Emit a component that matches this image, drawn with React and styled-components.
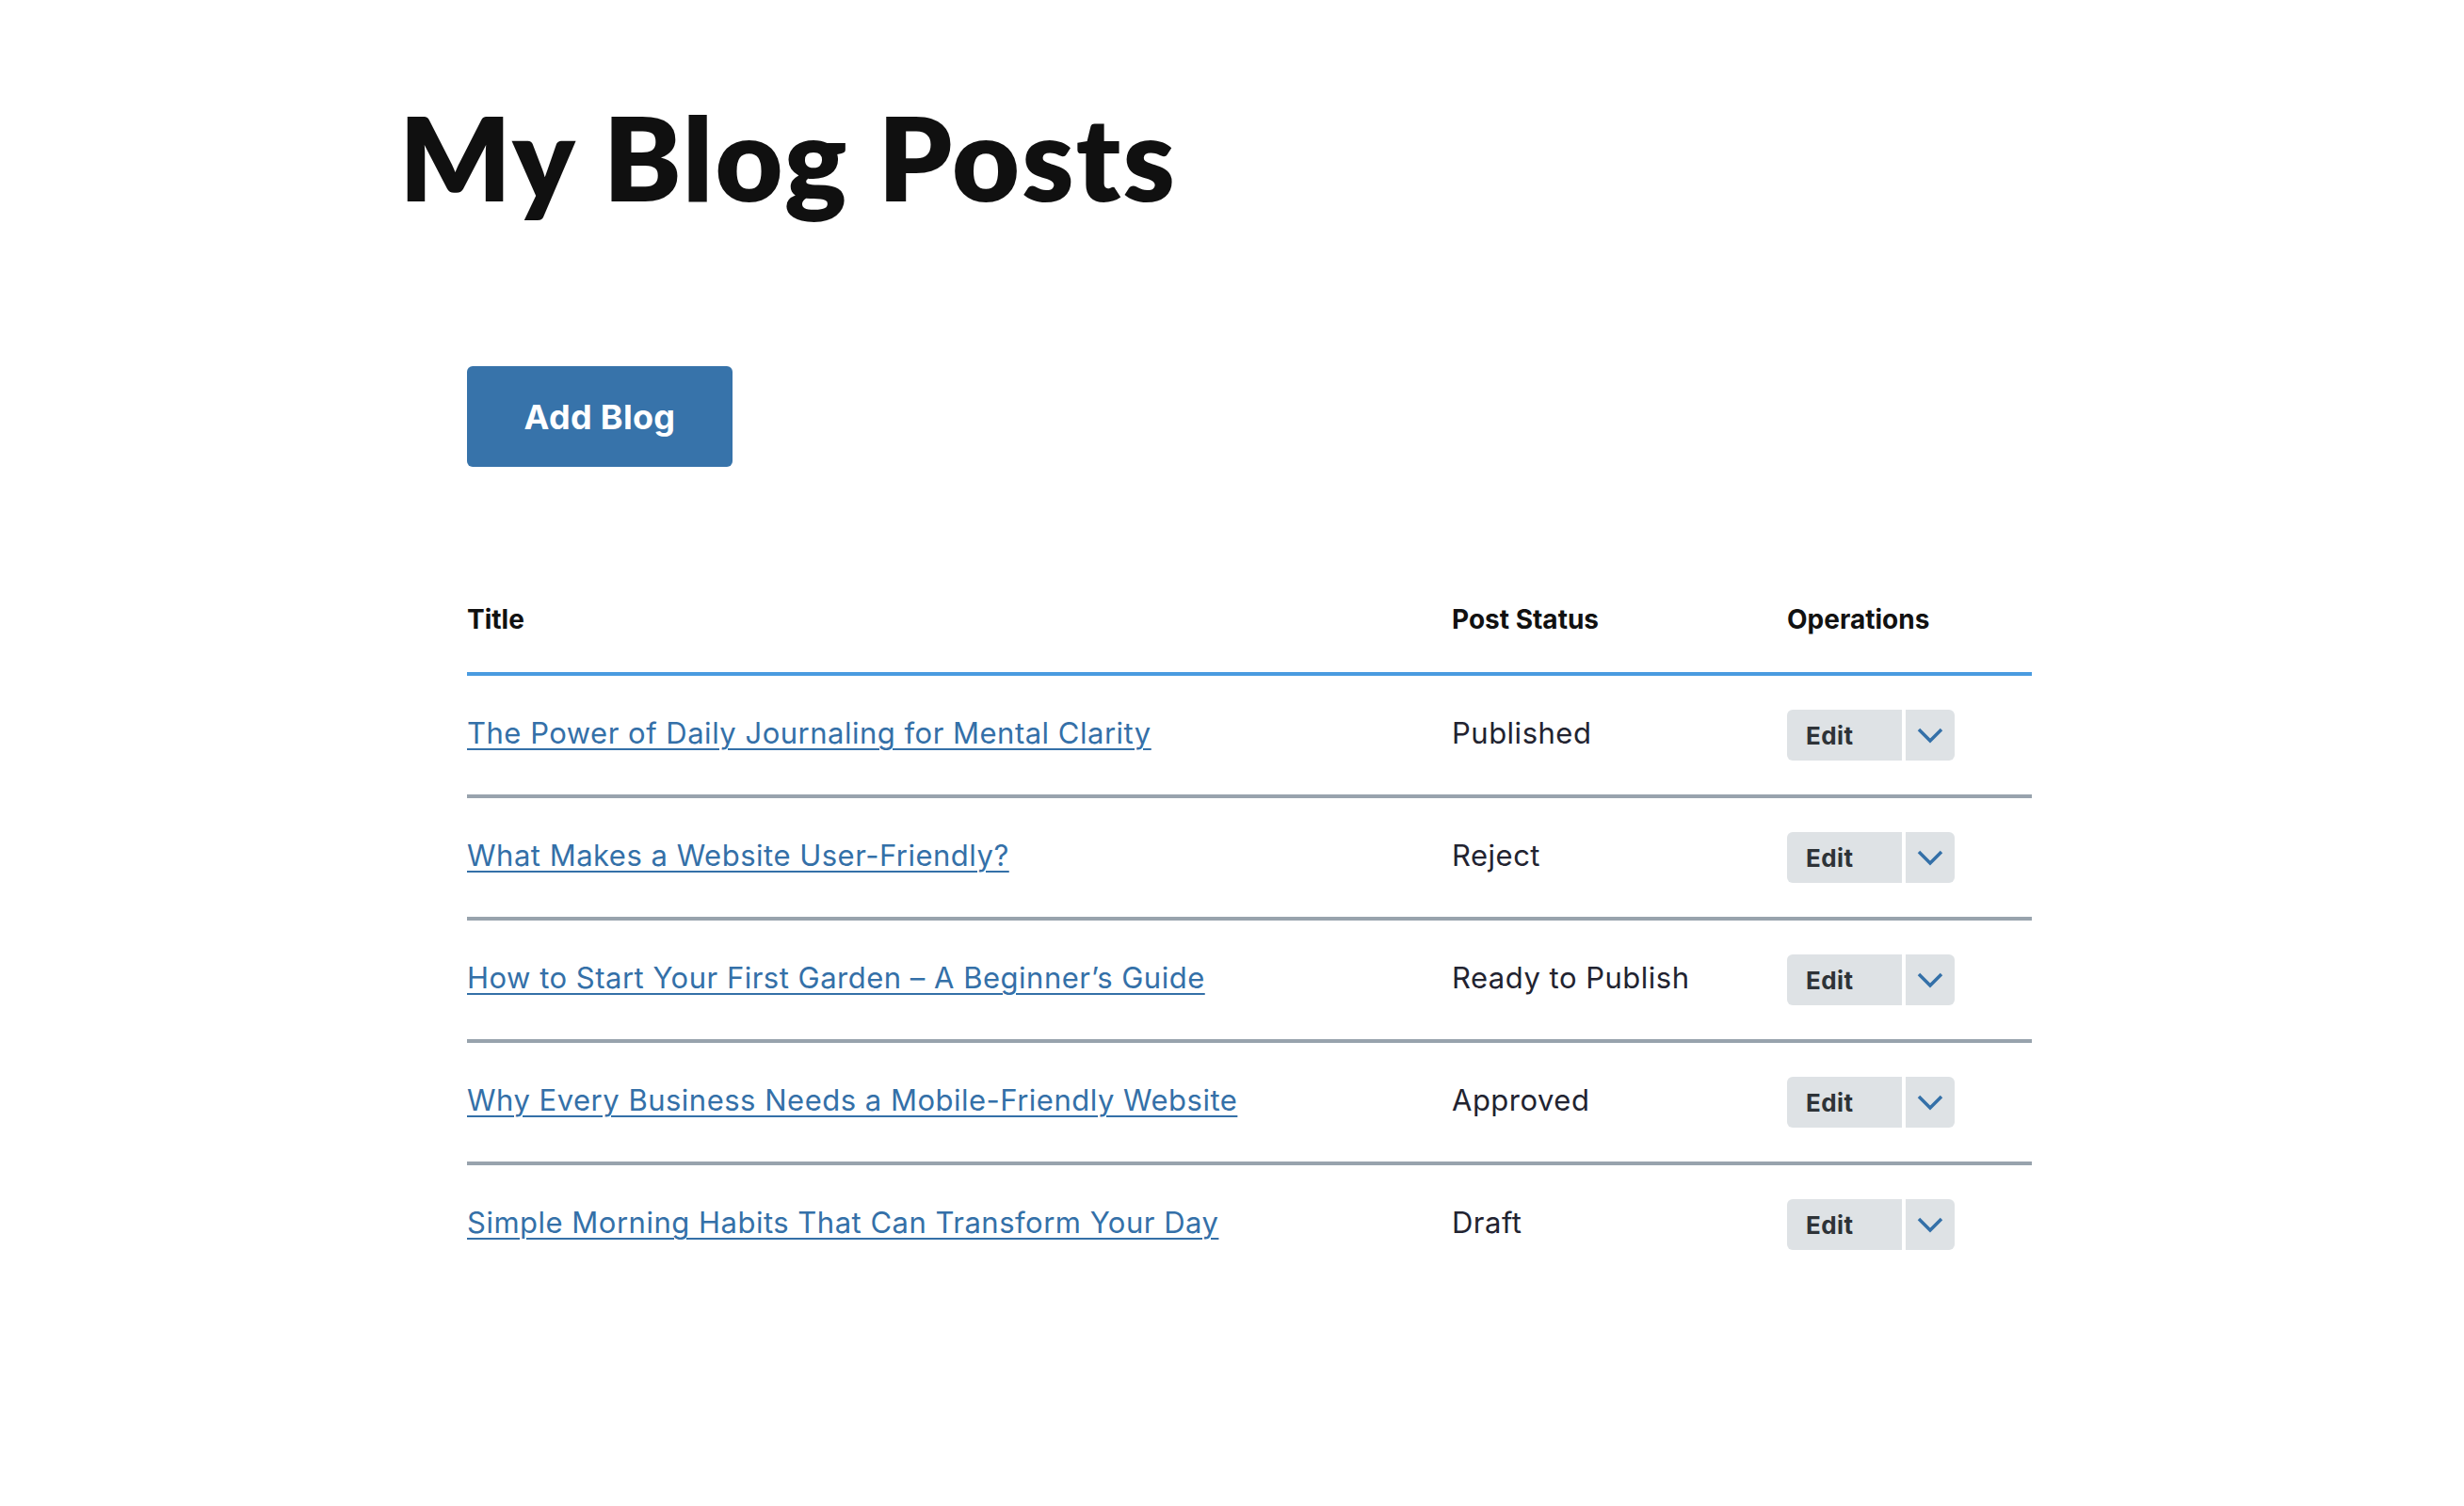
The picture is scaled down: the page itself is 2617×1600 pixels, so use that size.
import React from 'react'
import styled, { createGlobalStyle } from 'styled-components'

const GlobalStyle = createGlobalStyle`
    body {
        margin: 0;
        background: #fff;
        font-family: Inter, "Noto Sans", sans-serif;
        color: #222330;
    }
`

const Page = styled.div`
    padding: 104px 0 0 424px;
`

const Heading = styled.h1`
    margin: 0;
    font-family: Lato, sans-serif;
    font-size: 124px;
    line-height: 1;
    font-weight: 800;
    color: #101010;
    letter-spacing: 2.2px;
`

const Content = styled.div`
    padding: 161px 0 0 72px;
    width: 1662px;
`

const AddButton = styled.button`
    display: flex;
    align-items: center;
    justify-content: center;
    width: 282px;
    height: 107px;
    border: none;
    border-radius: 6px;
    background: #3773aa;
    color: #fff;
    font-family: Inter, sans-serif;
    font-size: 36px;
    font-weight: 700;
    letter-spacing: 0.3px;
    cursor: pointer;
`

const Table = styled.table`
    margin-top: 105px;
    width: 100%;
    border-collapse: collapse;
    table-layout: fixed;
`

const HeadCell = styled.th`
    height: 113px;
    padding: 0;
    text-align: left;
    font-size: 28px;
    font-weight: 700;
    color: #111;
    border-bottom: 4px solid #4a9be0;
    width: ${p => p.$w || 'auto'};
`

const Row = styled.tr`
    border-bottom: ${p => (p.$last ? 'none' : '4px solid #98a3ad')};
`

const Cell = styled.td`
    height: ${p => (p.$text ? '121px' : '126px')};
    padding: 0 0 ${p => (p.$text ? '5px' : '0')} 0;
    font-size: 31px;
    letter-spacing: 0.5px;
    color: #222330;
    vertical-align: middle;
`

const TitleLink = styled.a`
    color: #3470a8;
    text-decoration: underline;
    text-decoration-thickness: 2px;
    text-underline-offset: 5px;
`

const OpGroup = styled.div`
    display: inline-flex;
    gap: 4px;
    height: 54px;
`

const EditBtn = styled.button`
    width: 122px;
    padding: 0 0 0 20px;
    text-align: left;
    border: none;
    border-radius: 6px 0 0 6px;
    background: #dee2e5;
    color: #2e3338;
    font-family: Inter, sans-serif;
    font-size: 26px;
    font-weight: 700;
    letter-spacing: 0.4px;
`

const Toggle = styled.button`
    width: 52px;
    display: flex;
    align-items: center;
    justify-content: center;
    border: none;
    border-radius: 0 6px 6px 0;
    background: #dee2e5;
    padding: 0;
`

const Chevron = () => (
    <svg width="28" height="18" viewBox="0 0 28 18">
        <path d="M2 3 L14 15 L26 3" fill="none" stroke="#3470a8" strokeWidth="3.5" />
    </svg>
)

const posts = [
    { title: 'The Power of Daily Journaling for Mental Clarity', status: 'Published' },
    { title: 'What Makes a Website User-Friendly?', status: 'Reject' },
    { title: 'How to Start Your First Garden – A Beginner’s Guide', status: 'Ready to Publish' },
    { title: 'Why Every Business Needs a Mobile-Friendly Website', status: 'Approved' },
    { title: 'Simple Morning Habits That Can Transform Your Day', status: 'Draft' },
]

const App = () => {
    return (
        <Page>
            <GlobalStyle />
            <Heading>My Blog Posts</Heading>
            <Content>
                <AddButton>Add Blog</AddButton>
                <Table>
                    <thead>
                        <tr>
                            <HeadCell $w="1046px">Title</HeadCell>
                            <HeadCell $w="356px">Post Status</HeadCell>
                            <HeadCell>Operations</HeadCell>
                        </tr>
                    </thead>
                    <tbody>
                        {posts.map((post, i) => (
                            <Row key={post.title} $last={i === posts.length - 1}>
                                <Cell $text><TitleLink href="#">{post.title}</TitleLink></Cell>
                                <Cell $text>{post.status}</Cell>
                                <Cell>
                                    <OpGroup>
                                        <EditBtn>Edit</EditBtn>
                                        <Toggle><Chevron /></Toggle>
                                    </OpGroup>
                                </Cell>
                            </Row>
                        ))}
                    </tbody>
                </Table>
            </Content>
        </Page>
    )
}

export default App
